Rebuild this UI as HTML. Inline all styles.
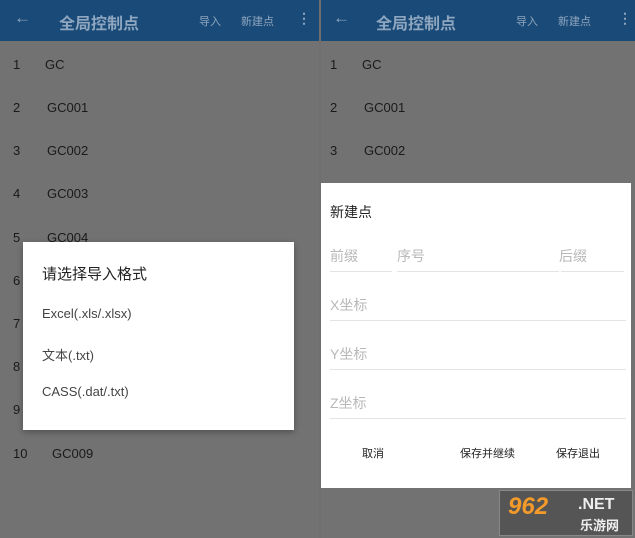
<!DOCTYPE html><html><head><meta charset="utf-8"><style>
*{margin:0;padding:0;box-sizing:border-box}
body{width:635px;height:538px;overflow:hidden;background:#6f6f6f;font-family:"Liberation Sans","Noto Sans CJK SC",sans-serif;position:relative}
.p{position:absolute;top:0;height:538px;background:#727272}
.h{position:absolute;left:0;right:0;top:0;height:41px;background:#1a4a77;color:#8ea6bf}
.h span{position:absolute;top:11px}
.r{position:absolute;font-size:13px;color:#1a1a1a}
.d{position:absolute;background:#fff}
.g{color:#b8b8b8;font-size:14px;position:absolute}
.ln{position:absolute;height:1px;background:#e4e4e4}
</style></head><body>
<div class="p" style="left:0;width:319px">
<div class="h"><span style="left:14px;font-size:17px;top:8px">←</span><span style="left:59px;font-size:16px;top:10px;font-weight:bold">全局控制点</span><span style="left:199px;font-size:11px;top:13px">导入</span><span style="left:241px;font-size:11px;top:13px">新建点</span><span style="left:297px;font-size:14px;top:10px;font-weight:bold">⋮</span></div>
<div class="r" style="left:13px;top:57px">1</div><div class="r" style="left:45px;top:57px">GC</div>
<div class="r" style="left:13px;top:100px">2</div><div class="r" style="left:47px;top:100px">GC001</div>
<div class="r" style="left:13px;top:143px">3</div><div class="r" style="left:47px;top:143px">GC002</div>
<div class="r" style="left:13px;top:186px">4</div><div class="r" style="left:47px;top:186px">GC003</div>
<div class="r" style="left:13px;top:230px">5</div><div class="r" style="left:47px;top:230px">GC004</div>
<div class="r" style="left:13px;top:273px">6</div>
<div class="r" style="left:13px;top:316px">7</div>
<div class="r" style="left:13px;top:359px">8</div>
<div class="r" style="left:13px;top:402px">9</div>
<div class="r" style="left:13px;top:446px">10</div><div class="r" style="left:52px;top:446px">GC009</div>
<div class="d" style="left:23px;top:242px;width:271px;height:188px;box-shadow:0 2px 6px rgba(0,0,0,.3)">
<div style="position:absolute;left:19px;top:21px;font-size:15px;color:#222">请选择导入格式</div>
<div style="position:absolute;left:19px;top:64px;font-size:13px;color:#444">Excel(.xls/.xlsx)</div>
<div style="position:absolute;left:19px;top:103px;font-size:13px;color:#444">文本(.txt)</div>
<div style="position:absolute;left:19px;top:142px;font-size:13px;color:#444">CASS(.dat/.txt)</div>
</div></div>
<div class="p" style="left:321px;width:314px">
<div class="h"><span style="left:12px;font-size:17px;top:8px">←</span><span style="left:55px;font-size:16px;top:10px;font-weight:bold">全局控制点</span><span style="left:195px;font-size:11px;top:13px">导入</span><span style="left:237px;font-size:11px;top:13px">新建点</span><span style="left:297px;font-size:14px;top:10px;font-weight:bold">⋮</span></div>
<div class="r" style="left:9px;top:57px">1</div><div class="r" style="left:41px;top:57px">GC</div>
<div class="r" style="left:9px;top:100px">2</div><div class="r" style="left:43px;top:100px">GC001</div>
<div class="r" style="left:9px;top:143px">3</div><div class="r" style="left:43px;top:143px">GC002</div>
<div class="d" style="left:0;top:183px;width:310px;height:305px">
<div style="position:absolute;left:9px;top:19px;font-size:14px;color:#222">新建点</div>
<div class="g" style="left:9px;top:63px">前缀</div><div class="g" style="left:76px;top:63px">序号</div><div class="g" style="left:238px;top:63px">后缀</div>
<div class="ln" style="left:9px;top:88px;width:62px"></div><div class="ln" style="left:76px;top:88px;width:162px"></div><div class="ln" style="left:240px;top:88px;width:63px"></div>
<div class="g" style="left:9px;top:112px">X坐标</div><div class="ln" style="left:9px;top:137px;width:296px"></div>
<div class="g" style="left:9px;top:161px">Y坐标</div><div class="ln" style="left:9px;top:186px;width:296px"></div>
<div class="g" style="left:9px;top:210px">Z坐标</div><div class="ln" style="left:9px;top:235px;width:296px"></div>
<div style="position:absolute;left:41px;top:262px;font-size:11px;color:#222">取消</div>
<div style="position:absolute;left:139px;top:262px;font-size:11px;color:#222">保存并继续</div>
<div style="position:absolute;left:235px;top:262px;font-size:11px;color:#222">保存退出</div>
</div>
<div style="position:absolute;left:178px;top:490px;width:134px;height:46px;background:#555;border:1px solid #888">
<span style="position:absolute;left:8px;top:2px;font-size:24px;font-weight:bold;font-style:italic;color:#f39a2b">962</span>
<span style="position:absolute;left:78px;top:5px;font-size:16px;font-weight:bold;color:#eee">.NET</span>
<span style="position:absolute;left:80px;top:24px;font-size:13px;font-weight:bold;color:#eee">乐游网</span>
</div>
</div>
</body></html>
